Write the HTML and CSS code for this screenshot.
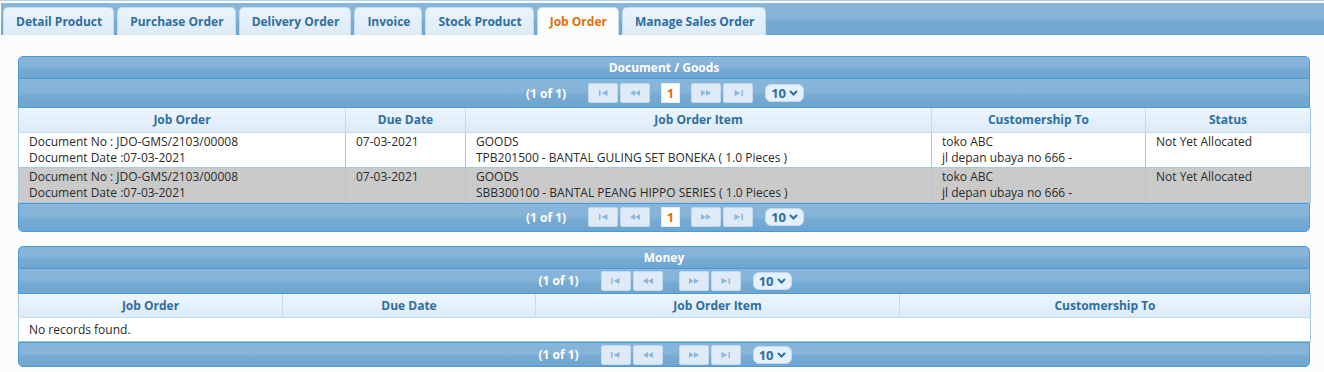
FILE: index.html
```html
<!DOCTYPE html>
<html>
<head>
<meta charset="utf-8">
<link rel="stylesheet" href="styles.css">
</head>
<body>
<div class="tabs">
  <ul class="tabnav">
    <li class="tab">Detail Product</li>
    <li class="tab">Purchase Order</li>
    <li class="tab">Delivery Order</li>
    <li class="tab">Invoice</li>
    <li class="tab">Stock Product</li>
    <li class="tab active">Job Order</li>
    <li class="tab">Manage Sales Order</li>
  </ul>
  <div class="content">
    <div class="panel">
      <div class="ptitle">Document / Goods</div>
      <div class="pager">
        <span class="pcur">(1 of 1)</span>
        <span class="pbtns">
          <span class="pb"><svg width="9" height="6" viewBox="0 0 9 6"><rect x="0" y="0" width="1.5" height="6"/><path d="M8.5 0 L2.5 3 L8.5 6Z"/></svg></span>
          <span class="pb"><svg width="10" height="6" viewBox="0 0 10 6"><path d="M5 0 L0 3 L5 6Z M10 0 L5 3 L10 6Z"/></svg></span>
        </span>
        <span class="ppages"><span class="page">1</span></span>
        <span class="pbtns">
          <span class="pb"><svg width="10" height="6" viewBox="0 0 10 6"><path d="M0 0 L5 3 L0 6Z M5 0 L10 3 L5 6Z"/></svg></span>
          <span class="pb"><svg width="9" height="6" viewBox="0 0 9 6"><path d="M0.5 0 L6.5 3 L0.5 6Z"/><rect x="7.5" y="0" width="1.5" height="6"/></svg></span>
        </span>
        <span class="psel">10 <svg width="9" height="6" viewBox="0 0 9 6"><path d="M1 1 L4.5 4.5 L8 1" fill="none" stroke-width="2"/></svg></span>
      </div>
      <table class="grid">
        <colgroup><col class="c1"><col class="c2"><col class="c3"><col class="c4"><col class="c5"></colgroup>
        <thead>
          <tr><th>Job Order</th><th>Due Date</th><th>Job Order Item</th><th>Customership To</th><th>Status</th></tr>
        </thead>
        <tbody>
          <tr>
            <td>Document No : JDO-GMS/2103/00008<br>Document Date :07-03-2021</td>
            <td>07-03-2021</td>
            <td>GOODS<br>TPB201500 - BANTAL GULING SET BONEKA ( 1.0 Pieces )</td>
            <td>toko ABC<br>jl depan ubaya no 666 -</td>
            <td>Not Yet Allocated</td>
          </tr>
          <tr class="alt">
            <td>Document No : JDO-GMS/2103/00008<br>Document Date :07-03-2021</td>
            <td>07-03-2021</td>
            <td>GOODS<br>SBB300100 - BANTAL PEANG HIPPO SERIES ( 1.0 Pieces )</td>
            <td>toko ABC<br>jl depan ubaya no 666 -</td>
            <td>Not Yet Allocated</td>
          </tr>
        </tbody>
      </table>
      <div class="pager bottom">
        <span class="pcur">(1 of 1)</span>
        <span class="pbtns">
          <span class="pb"><svg width="9" height="6" viewBox="0 0 9 6"><rect x="0" y="0" width="1.5" height="6"/><path d="M8.5 0 L2.5 3 L8.5 6Z"/></svg></span>
          <span class="pb"><svg width="10" height="6" viewBox="0 0 10 6"><path d="M5 0 L0 3 L5 6Z M10 0 L5 3 L10 6Z"/></svg></span>
        </span>
        <span class="ppages"><span class="page">1</span></span>
        <span class="pbtns">
          <span class="pb"><svg width="10" height="6" viewBox="0 0 10 6"><path d="M0 0 L5 3 L0 6Z M5 0 L10 3 L5 6Z"/></svg></span>
          <span class="pb"><svg width="9" height="6" viewBox="0 0 9 6"><path d="M0.5 0 L6.5 3 L0.5 6Z"/><rect x="7.5" y="0" width="1.5" height="6"/></svg></span>
        </span>
        <span class="psel">10 <svg width="9" height="6" viewBox="0 0 9 6"><path d="M1 1 L4.5 4.5 L8 1" fill="none" stroke-width="2"/></svg></span>
      </div>
    </div>

    <div class="panel">
      <div class="ptitle">Money</div>
      <div class="pager short">
        <span class="pcur">(1 of 1)</span>
        <span class="pbtns">
          <span class="pb"><svg width="9" height="6" viewBox="0 0 9 6"><rect x="0" y="0" width="1.5" height="6"/><path d="M8.5 0 L2.5 3 L8.5 6Z"/></svg></span>
          <span class="pb"><svg width="10" height="6" viewBox="0 0 10 6"><path d="M5 0 L0 3 L5 6Z M10 0 L5 3 L10 6Z"/></svg></span>
        </span>
        <span class="ppages empty"></span>
        <span class="pbtns">
          <span class="pb"><svg width="10" height="6" viewBox="0 0 10 6"><path d="M0 0 L5 3 L0 6Z M5 0 L10 3 L5 6Z"/></svg></span>
          <span class="pb"><svg width="9" height="6" viewBox="0 0 9 6"><path d="M0.5 0 L6.5 3 L0.5 6Z"/><rect x="7.5" y="0" width="1.5" height="6"/></svg></span>
        </span>
        <span class="psel">10 <svg width="9" height="6" viewBox="0 0 9 6"><path d="M1 1 L4.5 4.5 L8 1" fill="none" stroke-width="2"/></svg></span>
      </div>
      <table class="grid money">
        <colgroup><col class="m1"><col class="m2"><col class="m3"><col class="m4"></colgroup>
        <thead>
          <tr><th>Job Order</th><th>Due Date</th><th>Job Order Item</th><th>Customership To</th></tr>
        </thead>
        <tbody>
          <tr class="empty-row"><td colspan="4">No records found.</td></tr>
        </tbody>
      </table>
      <div class="pager bottom short">
        <span class="pcur">(1 of 1)</span>
        <span class="pbtns">
          <span class="pb"><svg width="9" height="6" viewBox="0 0 9 6"><rect x="0" y="0" width="1.5" height="6"/><path d="M8.5 0 L2.5 3 L8.5 6Z"/></svg></span>
          <span class="pb"><svg width="10" height="6" viewBox="0 0 10 6"><path d="M5 0 L0 3 L5 6Z M10 0 L5 3 L10 6Z"/></svg></span>
        </span>
        <span class="ppages empty"></span>
        <span class="pbtns">
          <span class="pb"><svg width="10" height="6" viewBox="0 0 10 6"><path d="M0 0 L5 3 L0 6Z M5 0 L10 3 L5 6Z"/></svg></span>
          <span class="pb"><svg width="9" height="6" viewBox="0 0 9 6"><path d="M0.5 0 L6.5 3 L0.5 6Z"/><rect x="7.5" y="0" width="1.5" height="6"/></svg></span>
        </span>
        <span class="psel">10 <svg width="9" height="6" viewBox="0 0 9 6"><path d="M1 1 L4.5 4.5 L8 1" fill="none" stroke-width="2"/></svg></span>
      </div>
    </div>
  </div>
</div>
</body>
</html>
```

FILE: styles.css
```css
* { box-sizing: border-box; }
html, body {
  margin: 0;
  padding: 0;
  background: #fbfdfd;
}
body {
  font-family: "Open Sans", "DejaVu Sans", sans-serif;
  font-size: 12px;
  color: #222;
}
.tabs {
  border-top: 1px solid #b4d0e8;
  padding-top: 2px;
}
.tabnav {
  list-style: none;
  margin: 0 0 0 1px;
  padding: 0 0 0 2px;
  height: 32px;
  display: flex;
  align-items: flex-end;
  gap: 3px;
  background: linear-gradient(180deg, #88b6da 0%, #86b4d9 45%, #76aad3 58%, #6fa6d1 100%);
}
.tab {
  height: 28px;
  line-height: 27px;
  padding: 0 11px 0 12px;
  border: 1px solid #c5dbec;
  border-bottom: none;
  border-radius: 5px 5px 0 0;
  background: linear-gradient(180deg, #eaf4fc 0%, #e3effa 55%, #dcebf8 100%);
  color: #2e6e9e;
  font-weight: bold;
  white-space: nowrap;
}
.tab.active {
  background: #fafcfe;
  color: #e17009;
}
.content {
  padding: 21px 14px 0 18px;
}
.panel {
  margin-bottom: 14px;
}
.ptitle {
  height: 23px;
  border: 1px solid #4a9ad6;
  border-radius: 5px 5px 0 0;
  background: linear-gradient(180deg, #88b6da 0%, #86b4d9 45%, #75aad3 60%, #6ea5d0 100%);
  color: #fff;
  font-weight: bold;
  display: flex;
  align-items: center;
  justify-content: center;
}
.pager {
  height: 29px;
  border: 1px solid #4a9ad6;
  border-top: none;
  background: linear-gradient(180deg, #88b6da 0%, #86b4d9 45%, #75aad3 60%, #6ea5d0 100%);
  display: flex;
  align-items: center;
  justify-content: center;
  color: #fff;
  font-weight: bold;
}
.pager.bottom {
  border-top: 1px solid #4a9ad6;
  border-radius: 0 0 5px 5px;
}
.pager.short {
  height: 25px;
}
.pcur {
  margin-right: 22px;
  margin-left: 2px;
}
.pbtns {
  display: flex;
  gap: 2px;
}
.pb {
  width: 30px;
  height: 20px;
  border: 1px solid #c3daee;
  border-radius: 2px;
  background: #deebf7;
  display: flex;
  align-items: center;
  justify-content: center;
}
.pb svg {
  fill: #8db8de;
}
.ppages {
  display: flex;
  margin: 0 11px;
}
.ppages.empty {
  margin: 0 8px;
}
.page {
  width: 19px;
  height: 20px;
  background: #fdfefe;
  border: 1px solid #e4eef7;
  color: #e17009;
  font-weight: bold;
  font-size: 13px;
  display: flex;
  align-items: center;
  justify-content: center;
}
.psel {
  margin-left: 12px;
  width: 39px;
  height: 18px;
  border-radius: 6px;
  background: #e4f0fb;
  border: 1px solid #c5dbec;
  color: #2e6e9e;
  font-weight: bold;
  font-size: 13px;
  display: flex;
  align-items: center;
  justify-content: center;
  gap: 3px;
}
.psel svg {
  stroke: #2e6e9e;
}
.grid {
  width: 100%;
  border-collapse: collapse;
  table-layout: fixed;
  background: #fff;
}
.grid th {
  height: 24px;
  padding: 0 4px;
  border: 1px solid #c5dbec;
  border-top: none;
  background: linear-gradient(180deg, #ebf5fd 0%, #e4f0fb 50%, #dcebf8 100%);
  color: #2e6e9e;
  font-weight: bold;
  text-align: center;
}
.grid th:first-child, .grid td:first-child { border-left-color: #a6c9e2; }
.grid th:last-child, .grid td:last-child { border-right-color: #a6c9e2; }
.grid td {
  border: 1px solid #a6c9e2;
  padding: 1px 10px 1px 10px;
  vertical-align: top;
  line-height: 16px;
  height: 35px;
  color: #2a2a2a;
}
.grid tr.alt td {
  background: #cacaca;
}
.grid tr.empty-row td {
  height: 24px;
  line-height: 16px;
  padding: 2px 10px;
  vertical-align: middle;
}
.c1 { width: 327px; }
.c2 { width: 120px; }
.c3 { width: 466px; }
.c4 { width: 214px; }
.c5 { width: 165px; }
.m1 { width: 264px; }
.m2 { width: 253px; }
.m3 { width: 364px; }
.m4 { width: 411px; }
```
